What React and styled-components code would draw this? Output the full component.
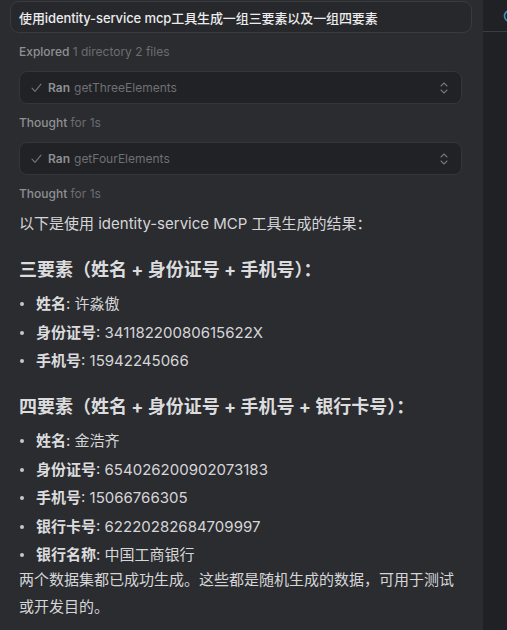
import React from "react";
import styled, { createGlobalStyle } from "styled-components";

const FONT = `Inter, "Noto Sans CJK SC", "Noto Sans", sans-serif`;

const GlobalStyle = createGlobalStyle`
  html, body {
    margin: 0;
    padding: 0;
    background: #2b2c30;
  }
  body {
    font-family: ${FONT};
    -webkit-font-smoothing: antialiased;
  }
`;

const Page = styled.div`
  display: flex;
  width: 507px;
  height: 630px;
  overflow: hidden;
`;

const Main = styled.main`
  width: 483px;
  flex-shrink: 0;
  background: #2b2c30;
  padding: 1px 11px 0 10px;
  box-sizing: border-box;
`;

const Side = styled.aside`
  flex: 1;
  background: #202124;
  overflow: hidden;
`;

const SideBar = styled.div`
  height: 31px;
  border-bottom: 1px solid #3b3c40;
  display: flex;
  align-items: center;
  padding-left: 20px;
`;

const Prompt = styled.div`
  height: 32px;
  box-sizing: border-box;
  border: 1px solid #3a3b3f;
  border-radius: 9px;
  background: #27282c;
  display: flex;
  align-items: center;
  padding: 0 8px;
  font-size: 13px;
  font-weight: 500;
  letter-spacing: -0.1px;
  color: #ececec;
  white-space: nowrap;
`;

const Body = styled.div`
  padding: 0 10px 0 9px;
`;

const Status = styled.div`
  margin-top: 10px;
  height: 18px;
  line-height: 18px;
  font-size: 12px;
  font-weight: 500;
  color: #8f9094;
`;

const Dim = styled.span`
  font-weight: 400;
  color: #6c6d71;
`;

const ToolCall = styled.div`
  margin-top: 10px;
  height: 33px;
  box-sizing: border-box;
  border: 1px solid #35363a;
  border-radius: 8px;
  background: #212225;
  display: flex;
  align-items: center;
  padding: 0 13px 0 11px;
  font-size: 12px;
  color: #6f7074;
`;

const ToolLabel = styled.span`
  margin-left: 6px;
  font-weight: 600;
  color: #8f9094;
`;

const ToolName = styled.span`
  margin-left: 4px;
  flex: 1;
`;

const Intro = styled.p`
  margin: 10px 0 0;
  line-height: 22px;
  font-size: 15px;
  color: #d6d6d8;
`;

const Heading = styled.h3`
  margin: 22px 0 0;
  line-height: 26px;
  font-size: 18px;
  font-weight: 700;
  color: #dcdcde;
`;

const List = styled.ul`
  list-style: none;
  margin: 10px 0 0;
  padding: 0;
  display: flex;
  flex-direction: column;
  gap: 6.5px;
`;

const Item = styled.li`
  position: relative;
  padding-left: 17px;
  line-height: 22px;
  font-size: 15px;
  color: #d6d6d8;

  &::before {
    content: "";
    position: absolute;
    left: 1px;
    top: 9px;
    width: 4px;
    height: 4px;
    border-radius: 50%;
    background: #c8c8ca;
  }
`;

const Key = styled.b`
  font-weight: 700;
  color: #dcdcde;
`;

const Closing = styled.p`
  margin: 0;
  line-height: 27px;
  font-size: 15px;
  color: #d6d6d8;
`;

const Check = () => (
  <svg width="11" height="10" viewBox="0 0 11 10" fill="none">
    <path d="M1 5.2 L4 8.4 L10 1.2" stroke="#75767a" strokeWidth="1.1" strokeLinecap="round" strokeLinejoin="round" />
  </svg>
);

const UpDown = () => (
  <svg width="8" height="12" viewBox="0 0 8 12" fill="none">
    <path d="M1 4 L4 1 L7 4 M1 8 L4 11 L7 8" stroke="#74757a" strokeWidth="1.1" strokeLinecap="round" strokeLinejoin="round" />
  </svg>
);

const Ring = () => (
  <svg width="14" height="14" viewBox="0 0 14 14" fill="none" style={{ flexShrink: 0 }}>
    <circle cx="7" cy="7" r="5.5" stroke="#3d8fc4" strokeWidth="1.6" />
  </svg>
);

function Tool({ name }) {
  return (
    <ToolCall>
      <Check />
      <ToolLabel>Ran</ToolLabel>
      <ToolName>{name}</ToolName>
      <UpDown />
    </ToolCall>
  );
}

const three = [
  ["姓名", "许淼傲"],
  ["身份证号", "34118220080615622X"],
  ["手机号", "15942245066"],
];

const four = [
  ["姓名", "金浩齐"],
  ["身份证号", "654026200902073183"],
  ["手机号", "15066766305"],
  ["银行卡号", "62220282684709997"],
  ["银行名称", "中国工商银行"],
];

export default function App() {
  return (
    <>
      <GlobalStyle />
      <Page>
        <Main>
          <Prompt>使用identity-service mcp工具生成一组三要素以及一组四要素</Prompt>
          <Body>
            <Status>
              Explored <Dim>1 directory 2 files</Dim>
            </Status>
            <Tool name="getThreeElements" />
            <Status>
              Thought <Dim>for 1s</Dim>
            </Status>
            <Tool name="getFourElements" />
            <Status>
              Thought <Dim>for 1s</Dim>
            </Status>
            <Intro>以下是使用 identity-service MCP 工具生成的结果：</Intro>
            <Heading>三要素（姓名 + 身份证号 + 手机号）：</Heading>
            <List>
              {three.map(([k, v]) => (
                <Item key={k}>
                  <Key>{k}</Key>: {v}
                </Item>
              ))}
            </List>
            <Heading>四要素（姓名 + 身份证号 + 手机号 + 银行卡号）：</Heading>
            <List>
              {four.map(([k, v]) => (
                <Item key={k}>
                  <Key>{k}</Key>: {v}
                </Item>
              ))}
            </List>
            <Closing>两个数据集都已成功生成。这些都是随机生成的数据，可用于测试或开发目的。</Closing>
          </Body>
        </Main>
        <Side>
          <SideBar>
            <Ring />
          </SideBar>
        </Side>
      </Page>
    </>
  );
}
